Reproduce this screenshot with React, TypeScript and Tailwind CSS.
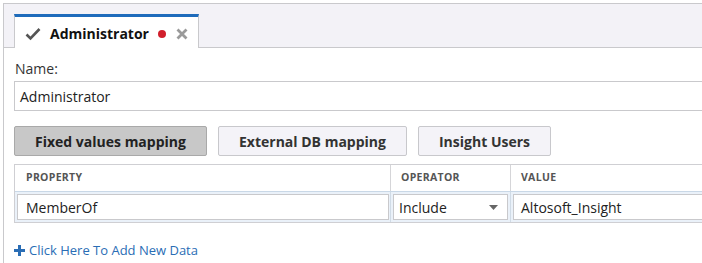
import React from "react";

export default function App() {
  return (
    <div
      className="w-[702px] h-[263px] bg-white overflow-hidden text-[13px] text-[#222]"
      style={{ fontFamily: '"Open Sans", "Noto Sans", sans-serif' }}
    >
      <div className="ml-[3px] mt-[3px] h-[260px] border-l border-t border-[#c9c9cc]">
        {/* header */}
        <div className="h-[44px] bg-[#f3f2f7] border-b border-[#c9c9cc] flex items-end pl-[10px]">
          <div className="w-[185px] h-[34px] -mb-px bg-white border-x border-[#c9c9cc] border-t-[3px] border-t-[#1e6bbb] flex items-center pl-[10px]">
            <svg width="16" height="14" viewBox="0 0 16 14" className="mt-[2px]">
              <polyline points="1.5,7.5 5.5,11.5 14.5,2" fill="none" stroke="#555" strokeWidth="2.6" />
            </svg>
            <span className="ml-[9px] font-bold text-[14px] text-[#111] mt-[1px]">Administrator</span>
            <span className="ml-[9px] w-[8px] h-[8px] rounded-full bg-[#d11f2c] mt-[2px]" />
            <svg width="12" height="12" viewBox="0 0 12 12" className="ml-[10px] mt-[2px]">
              <path d="M1.5 1.5 L10.5 10.5 M10.5 1.5 L1.5 10.5" stroke="#9a9a9a" strokeWidth="2.8" />
            </svg>
          </div>
        </div>
        {/* content */}
        <div className="pl-[10px]">
          <div className="pt-[12px] h-[30px] leading-[18px] pl-[1px] text-[14px] text-[#333]">Name:</div>
          <div className="mt-[3px] w-[700px] h-[30px] border border-[#c9c9cc] flex items-center pl-[5px] text-[14px] text-[#222]">
            Administrator
          </div>
          <div className="mt-[15px] flex gap-[11px] text-[14px]">
            <div className="w-[193px] h-[30px] bg-[#c8c8c8] border border-[#a9a9a9] rounded-[2px] flex items-center justify-center font-bold text-[#222]">
              Fixed values mapping
            </div>
            <div className="w-[189px] h-[30px] bg-[#f4f3f8] border border-[#c8c8cc] rounded-[2px] flex items-center justify-center font-bold text-[#333]">
              External DB mapping
            </div>
            <div className="w-[133px] h-[30px] bg-[#f4f3f8] border border-[#c8c8cc] rounded-[2px] flex items-center justify-center font-bold text-[#333]">
              Insight Users
            </div>
          </div>
          {/* table */}
          <div className="mt-[8px] w-[720px] border border-[#cfcfd3]">
            <div className="flex h-[26px] items-center text-[10.5px] font-bold text-[#555] tracking-[0.3px]">
              <div className="w-[376px] h-full flex items-center pl-[11px] border-r border-[#d5d5d8]">PROPERTY</div>
              <div className="w-[120px] h-full flex items-center pl-[10px] border-r border-[#d5d5d8]">OPERATOR</div>
              <div className="flex-1 h-full flex items-center pl-[10px]">VALUE</div>
            </div>
            <div className="flex h-[31px] bg-[#eaf1f9] border-t border-[#c9d8e7] text-[14px] text-[#222]">
              <div className="w-[376px] h-full py-[2px] pl-[2px] pr-[1px] border-r border-[#d0dbe6]">
                <div className="h-full bg-white border border-[#c9c9cc] flex items-center pl-[8px]">MemberOf</div>
              </div>
              <div className="w-[120px] h-full py-[2px] px-[2px] border-r border-[#d0dbe6]">
                <div className="h-full bg-white border border-[#c9c9cc] flex items-center pl-[5px] pr-[9px] justify-between">
                  <span>Include</span>
                  <svg width="9" height="5" viewBox="0 0 9 5">
                    <polygon points="0,0 9,0 4.5,5" fill="#666" />
                  </svg>
                </div>
              </div>
              <div className="flex-1 h-full py-[2px] pl-[2px]">
                <div className="h-full bg-white border border-[#c9c9cc] flex items-center pl-[7px]">Altosoft_Insight</div>
              </div>
            </div>
          </div>
          <div className="mt-[18px] flex items-center text-[#2a6db5] text-[13px]">
            <svg width="11" height="11" viewBox="0 0 11 11" className="mr-[4px]">
              <path d="M5.5 0 V11 M0 5.5 H11" stroke="#2a6db5" strokeWidth="3" />
            </svg>
            Click Here To Add New Data
          </div>
        </div>
      </div>
    </div>
  );
}
